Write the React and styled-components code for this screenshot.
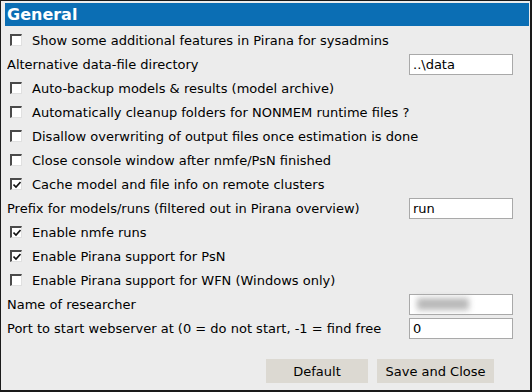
import React from "react";
import styled, { createGlobalStyle } from "styled-components";

const Global = createGlobalStyle`
  html, body { margin: 0; padding: 0; background: #fff; }
  body { font-family: "DejaVu Sans", Verdana, sans-serif; }
  * { box-sizing: border-box; }
`;

const Window = styled.div`
  width: 532px;
  height: 392px;
  background: #ececec;
  border-style: solid;
  border-color: #1a1a1a;
  border-width: 1px 2px 2px 1px;
  padding: 2px 1px 0 4px;
  display: flex;
  flex-direction: column;
  color: #000;
  font-size: 13px;
`;

const Header = styled.div`
  height: 23px;
  background: #0b6eb4;
  color: #fff;
  font-weight: bold;
  font-size: 16px;
  line-height: 23px;
  padding-left: 2px;
`;

const List = styled.div`
  margin-top: 2px;
  display: flex;
  flex-direction: column;
`;

const Row = styled.div`
  height: 24px;
  display: flex;
  align-items: center;
  padding-left: ${(p) => (p.$check ? "5px" : "2px")};
  padding-right: 16px;
  white-space: nowrap;
`;

const Label = styled.span`
  flex: 1;
  overflow: hidden;
  padding-left: ${(p) => (p.$check ? "10px" : "0")};
`;

const Box = styled.span`
  flex: none;
  width: 12px;
  height: 12px;
  background: #fff;
  border-top: 2px solid #4a4a4a;
  border-left: 2px solid #4a4a4a;
  border-right: 1px solid #e0e0e0;
  border-bottom: 1px solid #e0e0e0;
  display: flex;
  align-items: center;
  justify-content: center;
`;

const Input = styled.div`
  flex: none;
  width: 104px;
  height: 21px;
  background: #fff;
  border: 1px solid #a9a9a9;
  padding-left: 3px;
  line-height: 19px;
  font-size: 13px;
  display: flex;
  align-items: center;
`;

const Blur = styled.span`
  display: inline-block;
  width: 52px;
  height: 12px;
  background: #b8b8b8;
  filter: blur(3px);
  margin-left: 4px;
`;

const Buttons = styled.div`
  margin-top: 19px;
  display: flex;
  justify-content: flex-end;
  gap: 9px;
  padding-right: 35px;
`;

const Button = styled.div`
  width: ${(p) => p.$w}px;
  height: 24px;
  background: #dcd9d2;
  display: flex;
  align-items: center;
  justify-content: center;
  font-size: 13px;
`;

const Check = ({ on }) => (
  <Box>
    {on && (
      <svg width="8" height="8" viewBox="0 0 8 8">
        <path d="M0.5 3.5 L3 6 L7.5 1" fill="none" stroke="#111" strokeWidth="1.6" />
      </svg>
    )}
  </Box>
);

const rows = [
  { t: "Show some additional features in Pirana for sysadmins", c: false },
  { t: "Alternative data-file directory", v: "..\\data" },
  { t: "Auto-backup models & results (model archive)", c: false },
  { t: "Automatically cleanup folders for NONMEM runtime files ?", c: false },
  { t: "Disallow overwriting of output files once estimation is done", c: false },
  { t: "Close console window after nmfe/PsN finished", c: false },
  { t: "Cache model and file info on remote clusters", c: true },
  { t: "Prefix for models/runs (filtered out in Pirana overview)", v: "run" },
  { t: "Enable nmfe runs", c: true },
  { t: "Enable Pirana support for PsN", c: true },
  { t: "Enable Pirana support for WFN (Windows only)", c: false },
  { t: "Name of researcher", blur: true },
  { t: "Port to start webserver at (0 = do not start, -1 = find free", v: "0" },
];

export default function App() {
  return (
    <>
      <Global />
      <Window>
        <Header>General</Header>
        <List>
          {rows.map((r, i) =>
            r.c !== undefined ? (
              <Row key={i} $check>
                <Check on={r.c} />
                <Label $check>{r.t}</Label>
              </Row>
            ) : (
              <Row key={i}>
                <Label>{r.t}</Label>
                <Input>{r.blur ? <Blur /> : r.v}</Input>
              </Row>
            )
          )}
        </List>
        <Buttons>
          <Button $w={102}>Default</Button>
          <Button $w={117}>Save and Close</Button>
        </Buttons>
      </Window>
    </>
  );
}
